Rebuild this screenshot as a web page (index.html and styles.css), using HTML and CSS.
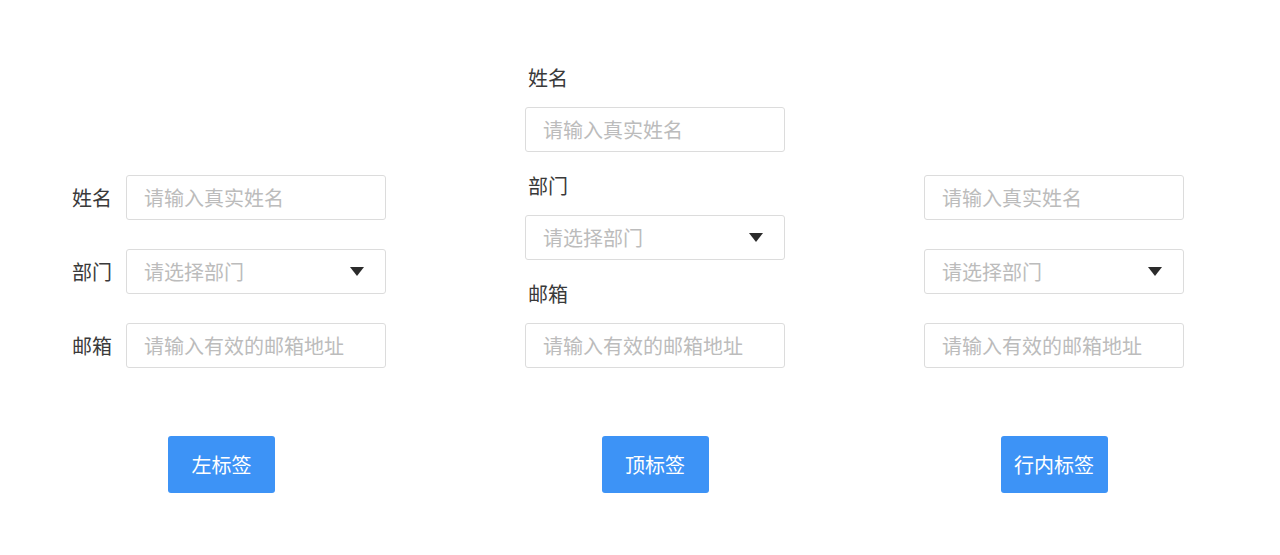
FILE: index.html
```html
<!DOCTYPE html>
<html lang="zh">
  <head>
    <meta charset="utf-8" />
    <meta name="viewport" content="width=device-width,initial-scale=1" />
    <title>表单标签位置</title>
    <link rel="stylesheet" href="styles.css">
  </head>
  <body>
    <div class="page">
      <!-- 左标签 -->
      <div class="col col-left">
        <form class="form form-left">
          <div class="field">
            <label class="field-label">姓名</label>
            <input class="field-input" type="text" placeholder="请输入真实姓名" />
          </div>
          <div class="field">
            <label class="field-label">部门</label>
            <div class="field-input field-select">
              <span class="select-text">请选择部门</span>
              <svg class="select-arrow" width="14" height="9" viewBox="0 0 14 9"><path d="M0 0h14L7 9z" fill="#2b2b2b"/></svg>
            </div>
          </div>
          <div class="field">
            <label class="field-label">邮箱</label>
            <input class="field-input" type="text" placeholder="请输入有效的邮箱地址" />
          </div>
        </form>
        <button class="btn">左标签</button>
      </div>

      <!-- 顶标签 -->
      <div class="col col-top">
        <form class="form form-top">
          <div class="field">
            <label class="field-label">姓名</label>
            <input class="field-input" type="text" placeholder="请输入真实姓名" />
          </div>
          <div class="field">
            <label class="field-label">部门</label>
            <div class="field-input field-select">
              <span class="select-text">请选择部门</span>
              <svg class="select-arrow" width="14" height="9" viewBox="0 0 14 9"><path d="M0 0h14L7 9z" fill="#2b2b2b"/></svg>
            </div>
          </div>
          <div class="field">
            <label class="field-label">邮箱</label>
            <input class="field-input" type="text" placeholder="请输入有效的邮箱地址" />
          </div>
        </form>
        <button class="btn">顶标签</button>
      </div>

      <!-- 行内标签 -->
      <div class="col col-inline">
        <form class="form form-inline">
          <div class="field">
            <input class="field-input" type="text" placeholder="请输入真实姓名" />
          </div>
          <div class="field">
            <div class="field-input field-select">
              <span class="select-text">请选择部门</span>
              <svg class="select-arrow" width="14" height="9" viewBox="0 0 14 9"><path d="M0 0h14L7 9z" fill="#2b2b2b"/></svg>
            </div>
          </div>
          <div class="field">
            <input class="field-input" type="text" placeholder="请输入有效的邮箱地址" />
          </div>
        </form>
        <button class="btn">行内标签</button>
      </div>
    </div>
  </body>
</html>
```

FILE: styles.css
```css
html {
  height: 100%;
}

body {
  margin: 0;
  height: 100%;
  background: #fff;
  font-family: "Noto Sans CJK SC", "Noto Sans", sans-serif;
  color: #333;
}

.page {
  display: flex;
  align-items: flex-start;
  gap: 139px;
  padding: 66px 0 0 72px;
}

.col {
  display: flex;
  flex-direction: column;
}

.col-left {
  width: 314px;
}

.col-top,
.col-inline {
  width: 260px;
}

.form {
  height: 302px;
  display: flex;
  flex-direction: column;
  justify-content: flex-end;
}

.field-label {
  font-size: 20px;
  line-height: 28px;
  color: #3a3a3a;
}

.field-input {
  box-sizing: border-box;
  width: 260px;
  height: 45px;
  padding: 0 17px;
  border: 1px solid #dcdcdc;
  border-radius: 3px;
  background: #fff;
  font-family: inherit;
  font-size: 20px;
  color: #333;
  outline: none;
}

.field-input::placeholder {
  color: #bcbcbc;
}

.field-select {
  display: flex;
  align-items: center;
  justify-content: space-between;
  padding-right: 21px;
}

.select-text {
  color: #bcbcbc;
}

/* 左标签 */
.form-left .field {
  display: flex;
  align-items: center;
  margin-top: 29px;
}

.form-left .field-label {
  width: 40px;
  margin-right: 14px;
}

/* 顶标签 */
.form-top .field {
  margin-top: 20px;
}

.form-top .field:first-child {
  margin-top: 0;
}

.form-top .field-label {
  display: block;
  margin: 0 0 15px 3px;
}

/* 行内标签 */
.form-inline .field {
  margin-top: 29px;
}

.btn {
  align-self: center;
  margin-top: 68px;
  width: 107px;
  height: 57px;
  border: none;
  border-radius: 3px;
  background: #3d93f6;
  color: #fff;
  font-family: inherit;
  font-size: 20px;
  cursor: pointer;
}

.col-left .btn {
  margin-right: 15px;
}
```
